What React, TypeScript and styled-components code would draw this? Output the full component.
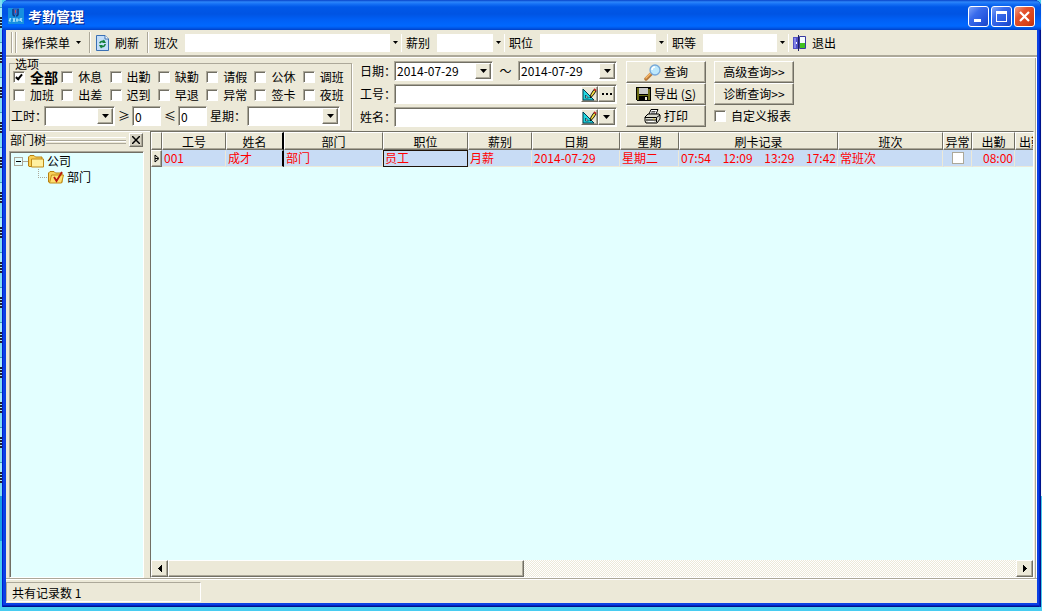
import React, { ReactNode, useState } from 'react';
import styled, { createGlobalStyle, css } from 'styled-components';

const face = '#ece9d8';
const shadow = '#716f64';
const mid = '#aca899';
const paper = '#e3ffff';

const Global = createGlobalStyle`
  *, *::before, *::after { box-sizing: border-box; }
  body { margin: 0; }
  body, button, input, select {
    font: 12px/16px "Noto Sans CJK SC", "Liberation Sans", sans-serif;
    color: #000;
  }
`;

const raised = css`
  border: 1px solid;
  border-color: #fff ${shadow} ${shadow} #fff;
  box-shadow: inset -1px -1px 0 ${mid};
`;
const sunken = css`
  border: 1px solid;
  border-color: ${mid} #fff #fff ${mid};
  box-shadow: inset 1px 1px 0 ${shadow};
`;

/* ---------- desktop and window frame ---------- */

const Desktop = styled.div`
  display: grid;
  grid-template-columns: 2px minmax(0, 1fr) 1px;
  height: 100vh;
  min-height: 400px;
  padding-bottom: 4px;
  background: #48ccf0;
  overflow: hidden;
`;
const BackdropStrip = styled.div`
  background:
    linear-gradient(transparent 496px, #189ce6 496px, #189ce6 541px, #48ccf0 541px),
    repeating-linear-gradient(
      #7fdcf2 0, #7fdcf2 7px, #3f9cb8 7px, #3f9cb8 8px, #a8ecf8 8px, #a8ecf8 17px,
      #223 17px, #223 19px, #a8ecf8 19px, #a8ecf8 20px, #223 20px, #223 22px,
      #a8ecf8 22px, #a8ecf8 23px, #223 23px, #223 25px, #a8ecf8 25px, #a8ecf8 26px,
      #223 26px, #223 28px, #7fdcf2 28px, #7fdcf2 35px
    );
`;
const BackdropEdge = styled.div`
  background: linear-gradient(#f4f8fc 496px, #48ccf0 496px);
`;
const Window = styled.main`
  display: flex;
  flex-direction: column;
  min-height: 0;
  padding: 0 4px 4px;
  background: #0a40e4;
  border-radius: 7px 7px 0 0;
  box-shadow: inset 1px 0 0 #0019cf, inset -1px 0 0 #00138c, inset -2px 0 0 #0024c4,
    inset 0 -1px 0 #00138c, inset 0 -2px 0 #0024c4;
  overflow: hidden;
`;
const TitleBar = styled.header`
  display: flex;
  align-items: center;
  flex: none;
  gap: 4px;
  height: 30px;
  margin: 0 -4px;
  padding: 2px 6px 0;
  background: linear-gradient(
    #0842c8 0, #2c86fa 2px, #1570f5 4px, #0058e8 7px, #0054e3 14px, #0060f6 20px,
    #0068ff 26px, #0058e8 28px, #0040c8 30px
  );
`;
const Title = styled.h1`
  flex: 1;
  margin: 0;
  font-size: 14px;
  line-height: 20px;
  font-weight: 700;
  color: #fff;
  text-shadow: 1px 1px 0 #00228c;
`;
const Caption = styled.div`
  display: flex;
  gap: 2px;
`;
const CaptionButton = styled.button<{ $close?: boolean }>`
  display: grid;
  place-items: center;
  width: 21px;
  height: 21px;
  padding: 0;
  border: 1px solid #fff;
  border-radius: 3px;
  background: ${(p) =>
    p.$close
      ? 'linear-gradient(135deg, #f0a088, #e4512c 35%, #d84218 75%, #b83010)'
      : 'linear-gradient(135deg, #7fa4f8, #3a6cec 35%, #2454dc 75%, #1a44c0)'};
`;

/* ---------- shared controls ---------- */

const SelectBox = styled.span<{ $width: number; $flat?: boolean }>`
  position: relative;
  display: block;
  flex: none;
  width: ${(p) => p.$width}px;
  height: ${(p) => (p.$flat ? 18 : 20)}px;
  background: #fff;
  ${(p) => !p.$flat && sunken}
`;
const NativeSelect = styled.select`
  display: block;
  width: 100%;
  height: 100%;
  padding: 0 18px 0 2px;
  border: 0;
  appearance: none;
  background: transparent;
`;
const Drop = styled.span<{ $flat?: boolean }>`
  position: absolute;
  top: ${(p) => (p.$flat ? 0 : 1)}px;
  right: 1px;
  bottom: ${(p) => (p.$flat ? 0 : 1)}px;
  display: grid;
  place-items: center;
  width: ${(p) => (p.$flat ? 11 : 16)}px;
  background: ${face};
  pointer-events: none;
  ${(p) => !p.$flat && raised}
`;
const TextInput = styled.input`
  min-width: 0;
  padding: 0 2px;
  border: 0;
  background: #fff;
`;
const NumberInput = styled(TextInput)`
  flex: none;
  width: 29px;
  height: 20px;
  ${sunken}
`;
const CheckBox = styled.input.attrs({ type: 'checkbox' })`
  display: grid;
  place-items: center;
  flex: none;
  width: 12px;
  height: 12px;
  margin: 0;
  appearance: none;
  background: #fff;
  ${sunken}
  &:checked::after {
    content: '';
    width: 4px;
    height: 7px;
    margin-top: -2px;
    border: solid #000;
    border-width: 0 2px 2px 0;
    transform: rotate(40deg);
  }
`;
const Check = styled.label<{ $strong?: boolean }>`
  display: flex;
  align-items: center;
  gap: 5px;
  white-space: nowrap;
  font-size: ${(p) => (p.$strong ? 14 : 12)}px;
  font-weight: ${(p) => (p.$strong ? 700 : 400)};
`;

const Arrow = ({ small }: { small?: boolean }) => (
  <svg width={small ? 5 : 7} height={small ? 3 : 4} viewBox={small ? '0 0 5 3' : '0 0 7 4'}>
    <path d={small ? 'M0 0h5L2.500 3z' : 'M0 0h7L3.500 4z'} />
  </svg>
);

type SelectProps = { id?: string; label?: string; width: number; flat?: boolean; value?: string };
const Select = ({ id, label, width, flat, value = '' }: SelectProps) => (
  <SelectBox $width={width} $flat={flat}>
    <NativeSelect id={id} aria-label={label} defaultValue={value}>
      <option>{value}</option>
    </NativeSelect>
    <Drop $flat={flat}><Arrow small={flat} /></Drop>
  </SelectBox>
);

/* ---------- toolbar ---------- */

const Toolbar = styled.nav`
  display: flex;
  align-items: center;
  flex: none;
  height: 27px;
  padding: 0 5px;
  background: ${face};
  border-bottom: 2px solid ${mid};
  white-space: nowrap;
`;
const Grip = styled.span`
  width: 5px;
  height: 21px;
  margin-right: 6px;
  border: solid ${mid};
  border-width: 0 1px;
  box-shadow: inset 1px 0 0 #fff, 1px 0 0 #fff;
`;
const ToolButton = styled.button`
  display: flex;
  align-items: center;
  gap: 6px;
  padding: 0;
  border: 0;
  background: none;
`;
const Divider = styled.span`
  width: 2px;
  height: 21px;
  margin: 0 5px 0 8px;
  border-left: 1px solid ${mid};
  border-right: 1px solid #fff;
`;
const ToolField = styled.label`
  display: flex;
  align-items: center;
  gap: 7px;
  margin-right: 4px;
`;

/* ---------- query form ---------- */

const Client = styled.div`
  display: flex;
  flex-direction: column;
  flex: 1;
  min-height: 0;
  padding: 0 2px 0 3px;
  background: ${face};
  border: solid #fff;
  border-width: 1px 1px 0 0;
  box-shadow: inset -1px 0 0 ${mid};
`;
const QueryForm = styled.form`
  display: flex;
  align-items: flex-start;
  flex: none;
  height: 73px;
`;
const Options = styled.fieldset`
  flex: none;
  width: 343px;
  height: 73px;
  margin: 0;
  padding: 0 0 0 3px;
  border: 1px solid ${mid};
  box-shadow: 1px 1px 0 #fff;
`;
const Legend = styled.legend`
  margin-left: 2px;
  padding: 0;
  line-height: 11px;
`;
const CheckGrid = styled.div`
  display: grid;
  grid-template-columns: repeat(7, 1fr);
  grid-auto-rows: 18px;
  margin-top: -1px;
`;
const OptionRow = styled.div`
  display: flex;
  align-items: center;
  gap: 3px;
  height: 22px;
  margin: 1px 0 0 -2px;
`;
const FieldLabel = styled.label<{ $width: number }>`
  flex: none;
  width: ${(p) => p.$width}px;
  white-space: nowrap;
`;
const Fields = styled.div`
  display: grid;
  grid-auto-rows: 20px;
  gap: 3px;
  flex: none;
  width: 257px;
  margin: 3px 9px 0 8px;
`;
const Field = styled.div`
  display: flex;
  align-items: center;
`;
const Tilde = styled.span`
  flex: 1;
  text-align: center;
`;
const Combo = styled.span`
  display: flex;
  flex: 1;
  height: 20px;
  padding: 1px;
  background: #fff;
  ${sunken}
  & > input { flex: 1; }
`;
const MiniButton = styled.button`
  display: grid;
  place-items: center;
  width: 17px;
  padding: 0;
  background: ${face};
  ${raised}
`;
const Actions = styled.div`
  display: grid;
  grid-auto-rows: 22px;
  flex: none;
  width: 80px;
  margin: 3px 8px 0 0;
`;
const PushButton = styled.button`
  display: flex;
  align-items: center;
  justify-content: center;
  gap: 3px;
  padding: 0;
  background: ${face};
  white-space: nowrap;
  ${raised}
`;

/* ---------- department tree ---------- */

const Body = styled.div`
  display: flex;
  flex: 1;
  gap: 6px;
  min-height: 0;
`;
const Side = styled.aside`
  display: flex;
  flex-direction: column;
  flex: none;
  width: 135px;
`;
const SideHeader = styled.div`
  display: flex;
  align-items: center;
  height: 20px;
  padding: 0 0 2px 1px;
`;
const SideGrip = styled.span`
  flex: 1;
  height: 7px;
  margin-right: 3px;
  border: solid ${mid};
  border-width: 0 0 1px;
  box-shadow: inset 0 1px 0 #fff, inset 0 3px 0 ${face}, inset 0 4px 0 ${mid}, inset 0 5px 0 #fff;
`;
const CloseButton = styled.button`
  display: grid;
  place-items: center;
  width: 14px;
  height: 14px;
  margin-right: 1px;
  padding: 0;
  background: #d6d2c2;
  ${raised}
`;
const Tree = styled.ul`
  flex: 1;
  margin: 0;
  padding: 1px 0 0 4px;
  list-style: none;
  background: ${paper};
  ${sunken}
`;
const Branch = styled.ul`
  margin: 0;
  padding: 0 0 0 24px;
  list-style: none;
`;
const Node = styled.span`
  display: flex;
  align-items: center;
  gap: 3px;
  height: 16px;
`;
const Expander = styled.button`
  position: relative;
  width: 9px;
  height: 9px;
  padding: 0;
  border: 1px solid ${mid};
  background: ${paper};
  &::after {
    content: '';
    position: absolute;
    inset: 3px 1px;
    background: #000;
  }
`;
const Dots = styled.span<{ $elbow?: boolean }>`
  width: ${(p) => (p.$elbow ? 11 : 6)}px;
  height: ${(p) => (p.$elbow ? 9 : 1)}px;
  margin: ${(p) => (p.$elbow ? '-8px -4px 0 0' : '0 -4px')};
  border: dotted ${mid};
  border-width: ${(p) => (p.$elbow ? '0 0 1px 1px' : '1px 0 0')};
`;

/* ---------- records grid ---------- */

const GridPane = styled.section`
  display: flex;
  flex-direction: column;
  flex: 1;
  min-width: 0;
  background: ${paper};
  border: 1px solid;
  border-color: ${shadow} #fff #fff ${shadow};
`;
const TableView = styled.div`
  flex: 1;
  min-height: 0;
  overflow: hidden;
`;
const Table = styled.table`
  width: 896px;
  table-layout: fixed;
  border-collapse: separate;
  border-spacing: 0;
`;
const frozenEdge = css`
  &:nth-child(3) { border-right: 2px solid #000; }
`;
const Th = styled.th`
  height: 18px;
  padding: 0;
  font-weight: 400;
  line-height: 15px;
  background: ${face};
  border: 1px solid;
  border-color: #fff ${shadow} ${shadow} #fff;
  box-shadow: inset 0 -1px 0 ${mid};
  white-space: nowrap;
  overflow: hidden;
  ${frozenEdge}
`;
const Td = styled.td<{ $focus?: boolean; $right?: boolean }>`
  height: 17px;
  padding: 0 1px;
  line-height: 14px;
  vertical-align: top;
  color: #f00;
  background: #c8dcf5;
  border: 1px solid ${(p) => (p.$focus ? '#201408' : 'transparent')};
  ${(p) => !p.$focus && `border-right-color: ${face}; border-bottom-color: ${face};`}
  text-align: ${(p) => (p.$right ? 'right' : 'left')};
  white-space: nowrap;
  ${frozenEdge}
`;
const Marker = styled.td`
  padding: 0;
  line-height: 0;
  text-align: center;
  background: ${face};
  ${raised}
`;
const Punches = styled.span`
  display: flex;
  justify-content: space-between;
`;
const FlagBox = styled(CheckBox)`
  margin: 1px auto 0;
  border: 1px solid ${mid};
  box-shadow: none;
`;
const ScrollBar = styled.div`
  display: flex;
  flex: none;
  height: 17px;
  background: repeating-conic-gradient(#fff 0 25%, ${face} 0 50%) 0 0 / 2px 2px;
`;
const ScrollButton = styled.button`
  display: grid;
  place-items: center;
  flex: none;
  width: 17px;
  padding: 0;
  background: ${face};
  ${raised}
`;
const ScrollTrack = styled.div`
  flex: 1;
`;
const Thumb = styled.div`
  width: 42%;
  height: 100%;
  background: ${face};
  ${raised}
`;

/* ---------- status bar ---------- */

const StatusBar = styled.footer`
  flex: none;
  height: 25px;
  padding-top: 3px;
  background: ${face};
  border-top: 1px solid ${mid};
  box-shadow: inset 0 1px 0 #fff;
`;
const StatusCell = styled.div`
  width: 195px;
  height: 20px;
  padding: 2px 5px 0;
  border: 1px solid;
  border-color: ${mid} #fff #fff ${mid};
`;

/* ---------- drawings ---------- */

const AppIcon = () => (
  <svg width="16" height="16" viewBox="0 0 16 16">
    <rect width="16" height="16" fill="#1690e0" />
    <rect x="5" width="6" height="7" fill="#2868c8" />
    <path d="M5 1v5q0 2 2 2M10 1v5q0 2-2 2" fill="none" stroke="#123a80" strokeWidth="1.5" />
    <path d="M7.5 2v3" stroke="#c84860" />
    <path d="M1 13l2-3M2 10v4M5 10l2 4M7 10l-2 4M9 10v4M8 12h4M12 10l2 4M14 10l-2 3" stroke="#c8f4ff" strokeWidth=".9" />
  </svg>
);
const RefreshIcon = () => (
  <svg width="13" height="16" viewBox="0 0 13 16">
    <path d="M.5.5h8.500l3.500 3.500v11.500H.5z" fill="#c4def8" stroke="#3a70b4" />
    <path d="M9 .5V4h3.500" fill="#fff" stroke="#3a70b4" />
    <path d="M3 8q1-3 4-2.500L8 4.500l2 3.500H6l1-1q-2 0-2.500 1.500zM10 9q-1 3.500-4 3.500l-1 1L3 10h4l-1 1q2 0 2.500-2z" fill="#14803c" />
  </svg>
);
const ExitIcon = () => (
  <svg width="13" height="16" viewBox="0 0 13 16">
    <path d="M6.500 1.500h6v12h-6z" fill="#f4fcff" stroke="#3838a0" />
    <path d="M7 8h5v5H7z" fill="#40c020" />
    <path d="M0 2h5v12H0z" fill="#5050c4" />
    <path d="M1 3h2v10H1z" fill="#8484e8" />
    <path d="M5 0h1v16H5z" fill="#202060" />
    <path d="M3.500 7v2" stroke="#fff" />
  </svg>
);
const SearchIcon = () => (
  <svg width="17" height="17" viewBox="0 0 17 17">
    <path d="M2 15l6-6" stroke="#b87838" strokeWidth="3.500" strokeLinecap="round" />
    <path d="M2 14l5-5" stroke="#f8b868" strokeWidth="1.500" strokeLinecap="round" />
    <circle cx="11" cy="6" r="5" fill="#bce8fc" stroke="#78a8d8" strokeWidth="1.300" />
    <path d="M8 6q0-3 3-3" fill="none" stroke="#fff" strokeWidth="1.500" />
  </svg>
);
const SaveIcon = () => (
  <svg width="15" height="14" viewBox="0 0 15 14" shapeRendering="crispEdges">
    <path d="M0 0h15v14H1l-1-1z" />
    <path d="M1 1h2v7h9V2h2v11H1z" fill="#6c6c14" />
    <path d="M3 1h9v6H3z" fill="#c8c8c8" />
    <path d="M3 9h9v5H3z" />
    <path d="M9 10h2v3H9z" fill="#ece9d8" />
  </svg>
);
const PrintIcon = () => (
  <svg width="17" height="15" viewBox="0 0 17 15">
    <path d="M5 5l2-4.500h7L12 5" fill="#fff" stroke="#000" />
    <path d="M7.500 2.500h4M7 4h4" stroke="#000" strokeWidth=".7" />
    <path d="M1 8l3-3h11l1 1v4l-3 4H2l-1-2z" fill="#dcdcd0" stroke="#000" />
    <path d="M1 8.500h11.500L16 6M12.500 8.500V13M2 11h10" fill="none" stroke="#000" />
    <path d="M4 12.500h6" stroke="#fff" />
    <path d="M9 10h2" stroke="#d8c020" />
  </svg>
);
const EditIcon = () => (
  <svg width="15" height="13" viewBox="0 0 15 13">
    <path d="M1 1v11h11z" fill="#20d8e0" stroke="#003c50" />
    <path d="M3.500 7v3h3z" fill="#ece9d8" stroke="#003c50" strokeWidth=".8" />
    <path d="M8 10l1-4 3-4.500 2 1.500-3 4.500z" fill="#f8e040" stroke="#000" strokeWidth=".9" />
    <path d="M12 1l2.200 1.600" stroke="#c02020" strokeWidth="1.600" />
  </svg>
);
const FolderIcon = ({ ticked }: { ticked?: boolean }) => (
  <svg width="16" height="14" viewBox="0 0 16 14">
    <path d="M.5 12V3L2 1.500h4L7.500 3H14v9.500H1z" fill="#f8d058" stroke="#b88010" />
    {ticked ? (
      <>
        <path d="M3.500 5h12l-2 8H1.500z" fill="#ffe070" stroke="#c08c18" />
        <path d="M6 7l2.500 4L14 2" fill="none" stroke="#b81c10" strokeWidth="1.800" />
      </>
    ) : (
      <path d="M3.500 5h12v8h-12z" fill="#fff0a0" stroke="#c08c18" />
    )}
  </svg>
);
const SideArrow = ({ right }: { right?: boolean }) => (
  <svg width="4" height="7" viewBox="0 0 4 7" shapeRendering="crispEdges">
    <path d={right ? 'M0 0l4 3.500L0 7z' : 'M4 0L0 3.500 4 7z'} />
  </svg>
);

/* ---------- data ---------- */

const options = ['全部', '休息', '出勤', '缺勤', '请假', '公休', '调班', '加班', '出差', '迟到', '早退', '异常', '签卡', '夜班'];
const toolFields: [string, number][] = [['班次', 217], ['薪别', 68], ['职位', 128], ['职等', 86]];
const columns: [string, number][] = [
  ['', 11], ['工号', 64], ['姓名', 58], ['部门', 99], ['职位', 85], ['薪别', 64], ['日期', 88],
  ['星期', 59], ['刷卡记录', 159], ['班次', 105], ['异常', 29], ['出勤', 43], ['出勤', 32],
];
const punches = ['07:54', '12:09', '13:29', '17:42'];
const row: { value: ReactNode; focus?: boolean; right?: boolean }[] = [
  { value: '001' },
  { value: '成才' },
  { value: '部门' },
  { value: '员工', focus: true },
  { value: '月薪' },
  { value: '2014-07-29' },
  { value: '星期二' },
  { value: <Punches>{punches.map((t) => <span key={t}>{t}</span>)}</Punches> },
  { value: '常班次' },
  { value: <FlagBox aria-label="异常" /> },
  { value: '08:00', right: true },
  { value: '' },
];

export default function App() {
  const [checked, setChecked] = useState<string[]>(['全部']);
  const toggle = (name: string) =>
    setChecked((now) => (now.includes(name) ? now.filter((n) => n !== name) : [...now, name]));

  return (
    <>
      <Global />
      <Desktop>
        <BackdropStrip />
        <Window>
          <TitleBar>
            <AppIcon />
            <Title>考勤管理</Title>
            <Caption>
              <CaptionButton aria-label="最小化">
                <svg width="15" height="15"><path d="M3 11.500h7" stroke="#fff" strokeWidth="3" /></svg>
              </CaptionButton>
              <CaptionButton aria-label="最大化">
                <svg width="15" height="15" shapeRendering="crispEdges">
                  <path d="M2.500 3v9.500h10V3" fill="none" stroke="#fff" />
                  <path d="M2 3.500h11" stroke="#fff" strokeWidth="3" />
                </svg>
              </CaptionButton>
              <CaptionButton $close aria-label="关闭">
                <svg width="15" height="15"><path d="M3 3l9 9M12 3l-9 9" stroke="#fff" strokeWidth="2.200" /></svg>
              </CaptionButton>
            </Caption>
          </TitleBar>

          <Toolbar>
            <Grip />
            <ToolButton>操作菜单 <Arrow small /></ToolButton>
            <Divider />
            <ToolButton><RefreshIcon />刷新</ToolButton>
            <Divider />
            {toolFields.map(([name, width]) => (
              <ToolField key={name}>
                {name}
                <Select flat width={width} />
              </ToolField>
            ))}
            <ToolButton><ExitIcon />退出</ToolButton>
          </Toolbar>

          <Client>
            <QueryForm onSubmit={(e) => e.preventDefault()}>
              <Options>
                <Legend>选项</Legend>
                <CheckGrid>
                  {options.map((name, i) => (
                    <Check key={name} $strong={i === 0}>
                      <CheckBox checked={checked.includes(name)} onChange={() => toggle(name)} />
                      {name}
                    </Check>
                  ))}
                </CheckGrid>
                <OptionRow>
                  <FieldLabel $width={30} htmlFor="hours">工时：</FieldLabel>
                  <Select id="hours" width={71} />
                  <FieldLabel $width={11} htmlFor="hours-min">≥</FieldLabel>
                  <NumberInput id="hours-min" defaultValue="0" />
                  <FieldLabel $width={11} htmlFor="hours-max">≤</FieldLabel>
                  <NumberInput id="hours-max" defaultValue="0" />
                  <FieldLabel $width={34} htmlFor="weekday">星期：</FieldLabel>
                  <Select id="weekday" width={93} />
                </OptionRow>
              </Options>

              <Fields>
                <Field>
                  <FieldLabel $width={34} htmlFor="from">日期：</FieldLabel>
                  <Select id="from" width={99} value="2014-07-29" />
                  <Tilde>～</Tilde>
                  <Select label="结束日期" width={99} value="2014-07-29" />
                </Field>
                <Field>
                  <FieldLabel $width={34} htmlFor="staff-no">工号：</FieldLabel>
                  <Combo>
                    <TextInput id="staff-no" />
                    <MiniButton type="button" aria-label="编辑工号"><EditIcon /></MiniButton>
                    <MiniButton type="button" aria-label="选择工号">
                      <svg width="10" height="2"><path d="M0 0h2v2H0zM4 0h2v2H4zM8 0h2v2H8z" /></svg>
                    </MiniButton>
                  </Combo>
                </Field>
                <Field>
                  <FieldLabel $width={34} htmlFor="staff-name">姓名：</FieldLabel>
                  <Combo>
                    <TextInput id="staff-name" />
                    <MiniButton type="button" aria-label="编辑姓名"><EditIcon /></MiniButton>
                    <MiniButton type="button" aria-label="选择姓名"><Arrow /></MiniButton>
                  </Combo>
                </Field>
              </Fields>

              <Actions>
                <PushButton type="submit"><SearchIcon />查询</PushButton>
                <PushButton type="button"><SaveIcon /><span>导出 (<u>S</u>)</span></PushButton>
                <PushButton type="button"><PrintIcon />打印</PushButton>
              </Actions>
              <Actions>
                <PushButton type="button">高级查询&gt;&gt;</PushButton>
                <PushButton type="button">诊断查询&gt;&gt;</PushButton>
                <Check><CheckBox />自定义报表</Check>
              </Actions>
            </QueryForm>

            <Body>
              <Side>
                <SideHeader>
                  部门树
                  <SideGrip />
                  <CloseButton aria-label="关闭部门树">
                    <svg width="8" height="8"><path d="M0 0l8 8M8 0L0 8" stroke="#000" strokeWidth="1.500" /></svg>
                  </CloseButton>
                </SideHeader>
                <Tree>
                  <li>
                    <Node><Expander aria-label="折叠" /><Dots /><Dots /><FolderIcon />公司</Node>
                    <Branch>
                      <li><Node><Dots $elbow /><FolderIcon ticked />部门</Node></li>
                    </Branch>
                  </li>
                </Tree>
              </Side>

              <GridPane>
                <TableView>
                  <Table>
                    <colgroup>
                      {columns.map(([, width], i) => <col key={i} width={width} />)}
                    </colgroup>
                    <thead>
                      <tr>{columns.map(([name], i) => <Th key={i}>{name}</Th>)}</tr>
                    </thead>
                    <tbody>
                      <tr>
                        <Marker>
                          <svg width="6" height="9"><path d="M1 1l4 3.500L1 8zM1 4.500h3" fill="none" stroke="#000" /></svg>
                        </Marker>
                        {row.map((cell, i) => (
                          <Td key={i} $focus={cell.focus} $right={cell.right}>{cell.value}</Td>
                        ))}
                      </tr>
                    </tbody>
                  </Table>
                </TableView>
                <ScrollBar>
                  <ScrollButton aria-label="向左滚动"><SideArrow /></ScrollButton>
                  <ScrollTrack><Thumb /></ScrollTrack>
                  <ScrollButton aria-label="向右滚动"><SideArrow right /></ScrollButton>
                </ScrollBar>
              </GridPane>
            </Body>
          </Client>

          <StatusBar><StatusCell>共有记录数 1</StatusCell></StatusBar>
        </Window>
        <BackdropEdge />
      </Desktop>
    </>
  );
}
